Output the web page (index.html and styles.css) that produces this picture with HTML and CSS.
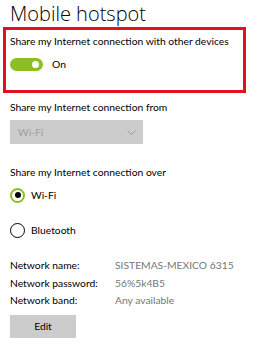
FILE: index.html
```html
<!DOCTYPE html>
<html>
<head>
<meta charset="utf-8">
<link rel="stylesheet" href="styles.css">
</head>
<body>
<div class="page">
  <h1 class="title">Mobile hotspot</h1>
  <div class="highlight">
    <div class="label">Share my Internet connection with other devices</div>
    <div class="toggle-row">
      <span class="toggle"><span class="knob"></span></span>
      <span class="toggle-text">On</span>
    </div>
  </div>

  <div class="label label-from">Share my Internet connection from</div>
  <div class="select">
    <span class="select-text">Wi-Fi</span>
    <svg class="chevron" width="9" height="5" viewBox="0 0 9 5"><path d="M0.5 0.5 L4.5 4.5 L8.5 0.5" fill="none" stroke="#9a9a9a" stroke-width="1"/></svg>
  </div>

  <div class="label label-over">Share my Internet connection over</div>
  <div class="radio-row radio-first">
    <span class="radio radio-on"><span class="dot"></span></span>
    <span class="radio-text">Wi-Fi</span>
  </div>
  <div class="radio-row radio-second">
    <span class="radio"></span>
    <span class="radio-text">Bluetooth</span>
  </div>

  <div class="info">
    <div class="info-key">Network name:</div><div class="info-val">SISTEMAS-MEXICO 6315</div>
    <div class="info-key">Network password:</div><div class="info-val">56%5k4B5</div>
    <div class="info-key">Network band:</div><div class="info-val">Any available</div>
  </div>
  <button class="edit">Edit</button>
</div>
</body>
</html>
```

FILE: styles.css
```css
html, body {
  margin: 0;
  padding: 0;
  background: #ffffff;
}
body {
  font-family: "Lato", "Open Sans", sans-serif;
  color: #000000;
  width: 260px;
  height: 344px;
  overflow: hidden;
}
.page {
  padding-left: 10px;
  display: flex;
  flex-direction: column;
  align-items: flex-start;
}
.title {
  margin: 0;
  font-family: "Open Sans", "Noto Sans", sans-serif;
  font-size: 20px;
  line-height: 27.3px;
  font-weight: 300;
  color: #000;
  white-space: nowrap;
}
.highlight {
  margin-left: -7px;
  width: 243px;
  box-sizing: border-box;
  border: 3px solid #e3101f;
  padding: 4px 0 19px 4px;
  display: flex;
  flex-direction: column;
  align-items: flex-start;
}
.label {
  font-size: 10.3px;
  line-height: 14px;
  color: #000;
  white-space: nowrap;
}
.toggle-row {
  margin-top: 9px;
  display: flex;
  align-items: center;
  gap: 9px;
}
.toggle {
  width: 33px;
  height: 13px;
  border-radius: 7px;
  background: #8cbf26;
  display: flex;
  align-items: center;
  justify-content: flex-end;
  padding-right: 4px;
  box-sizing: border-box;
}
.knob {
  width: 7px;
  height: 7px;
  border-radius: 50%;
  background: #ffffff;
}
.toggle-text {
  font-size: 10.3px;
  line-height: 14px;
}
.label-from {
  margin-top: 7px;
}
.select {
  margin-top: 6px;
  width: 133px;
  height: 24px;
  background: #cccccc;
  box-sizing: border-box;
  padding: 0 7px 0 8px;
  display: flex;
  align-items: center;
  justify-content: space-between;
}
.select-text {
  font-size: 10.3px;
  color: #9e9e9e;
}
.label-over {
  margin-top: 21px;
}
.radio-row {
  height: 20px;
  display: flex;
  align-items: center;
  gap: 6px;
}
.radio-first {
  margin-top: 6px;
}
.radio-second {
  margin-top: 15px;
}
.radio {
  width: 15px;
  height: 15px;
  box-sizing: border-box;
  border-radius: 50%;
  border: 1.5px solid #000;
  display: flex;
  align-items: center;
  justify-content: center;
}
.radio-on {
  border: 2px solid #8cbf26;
}
.dot {
  width: 6px;
  height: 6px;
  border-radius: 50%;
  background: #000;
}
.radio-text {
  font-size: 10.3px;
}
.info {
  margin-top: 17px;
  display: grid;
  grid-template-columns: 105px auto;
  font-size: 10.3px;
  line-height: 17.5px;
  white-space: nowrap;
}
.info-key {
  color: #000;
}
.info-val {
  color: #767676;
}
.edit {
  margin-top: 5px;
  width: 66px;
  height: 23px;
  border: none;
  background: #cccccc;
  font-family: inherit;
  font-size: 10.3px;
  color: #000;
  padding: 0;
}
```
